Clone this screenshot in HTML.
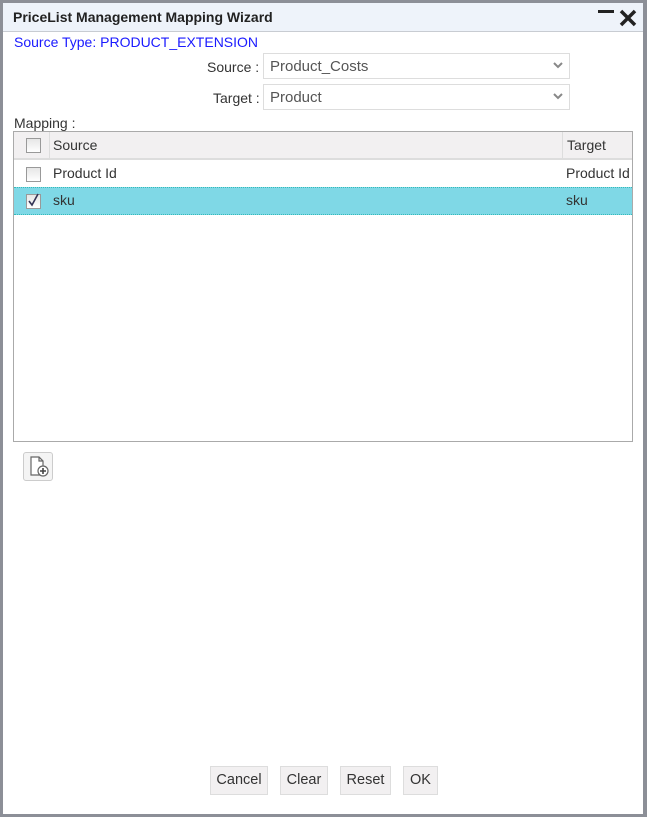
<!DOCTYPE html><html><head><style>
body{margin:0;width:647px;height:817px;background:#8c8f97;font-family:"Liberation Sans",sans-serif;position:relative;overflow:hidden}
.dlg{position:absolute;left:3px;top:3px;width:640px;height:811px;background:#fff}
.title{position:absolute;left:0;top:0;width:640px;height:28px;background:#eef3fa;border-bottom:1px solid #c8ccd2}
.title span{position:absolute;left:10px;top:6px;font-size:14px;font-weight:bold;color:#222}
.a{position:absolute;font-size:14px;color:#333}
.sel{position:absolute;left:260px;width:307px;height:26px;border:1px solid #ddd;font-size:15px;color:#555;box-sizing:border-box;padding:4px 6px}
.sel svg{position:absolute;right:6px;top:8px}
.tbl{position:absolute;left:10px;top:128px;width:620px;height:311px;border:1px solid #aaa;box-sizing:border-box}
.cb{position:absolute;width:15px;height:15px;border:1px solid #999;background:linear-gradient(#e6e6e6,#fff);box-sizing:border-box}
.btn{position:absolute;top:766px;height:29px;background:#f2f0f1;border:1px solid #ddd;box-sizing:border-box;font-size:14.5px;color:#333;text-align:center;line-height:27px}
</style></head><body>
<div class="dlg">
<div class="title"><span>PriceList Management Mapping Wizard</span>
<div style="position:absolute;left:595px;top:7px;width:16px;height:3px;background:#222"></div>
<svg style="position:absolute;left:616px;top:6px" width="18" height="18"><path d="M2 2L16 16M16 2L2 16" stroke="#222" stroke-width="3.5"/></svg></div>
<div class="a" style="left:11px;top:31px;color:#1a1aff">Source Type: PRODUCT_EXTENSION</div>
<div class="a" style="left:204px;top:56px">Source :</div>
<div class="sel" style="top:50px">Product_Costs<svg width="10" height="8"><path d="M1 1L5 5L9 1" stroke="#888" stroke-width="2" fill="none"/></svg></div>
<div class="a" style="left:210px;top:87px">Target :</div>
<div class="sel" style="top:81px">Product<svg width="10" height="8"><path d="M1 1L5 5L9 1" stroke="#888" stroke-width="2" fill="none"/></svg></div>
<div class="a" style="left:11px;top:112px">Mapping :</div>
<div class="tbl">
<div style="position:absolute;left:0;top:0;width:618px;height:26px;background:#f2f0f1;border-bottom:2px solid #ddd"></div>
<div style="position:absolute;left:35px;top:0;width:1px;height:26px;background:#ddd"></div>
<div style="position:absolute;left:548px;top:0;width:1px;height:26px;background:#ddd"></div>
<div class="cb" style="left:12px;top:6px"></div>
<div class="a" style="left:39px;top:5px">Source</div>
<div class="a" style="left:553px;top:5px">Target</div>
<div class="cb" style="left:12px;top:35px"></div>
<div class="a" style="left:39px;top:33px">Product Id</div>
<div class="a" style="left:552px;top:33px">Product Id</div>
<div style="position:absolute;left:0;top:55px;width:618px;height:26px;background:#7fd8e6;border-top:1px dotted #3bb;border-bottom:1px dotted #3bb"></div>
<div class="cb" style="left:12px;top:62px"></div>
<svg style="position:absolute;left:13px;top:61px" width="13" height="14"><path d="M2 8L5 12L11 1" stroke="#335" stroke-width="1.6" fill="none"/></svg>
<div class="a" style="left:39px;top:60px">sku</div>
<div class="a" style="left:552px;top:60px">sku</div>
</div>
<div style="position:absolute;left:20px;top:449px;width:28px;height:27px;border:1px solid #ccc;border-radius:3px;background:#f4f4f4"></div>
<svg style="position:absolute;left:24px;top:452px" width="24" height="24"><path d="M4 2H12L16 6V20H4Z M12 2V6H16" fill="#fff" stroke="#666" stroke-width="1.2"/><circle cx="16" cy="16" r="5" fill="#fff" stroke="#666" stroke-width="1.2"/><path d="M13 16H19M16 13V19" stroke="#444" stroke-width="1.6"/></svg>
</div>
<div class="btn" style="left:210px;width:58px">Cancel</div>
<div class="btn" style="left:280px;width:48px">Clear</div>
<div class="btn" style="left:340px;width:51px">Reset</div>
<div class="btn" style="left:403px;width:35px">OK</div>
</body></html>
